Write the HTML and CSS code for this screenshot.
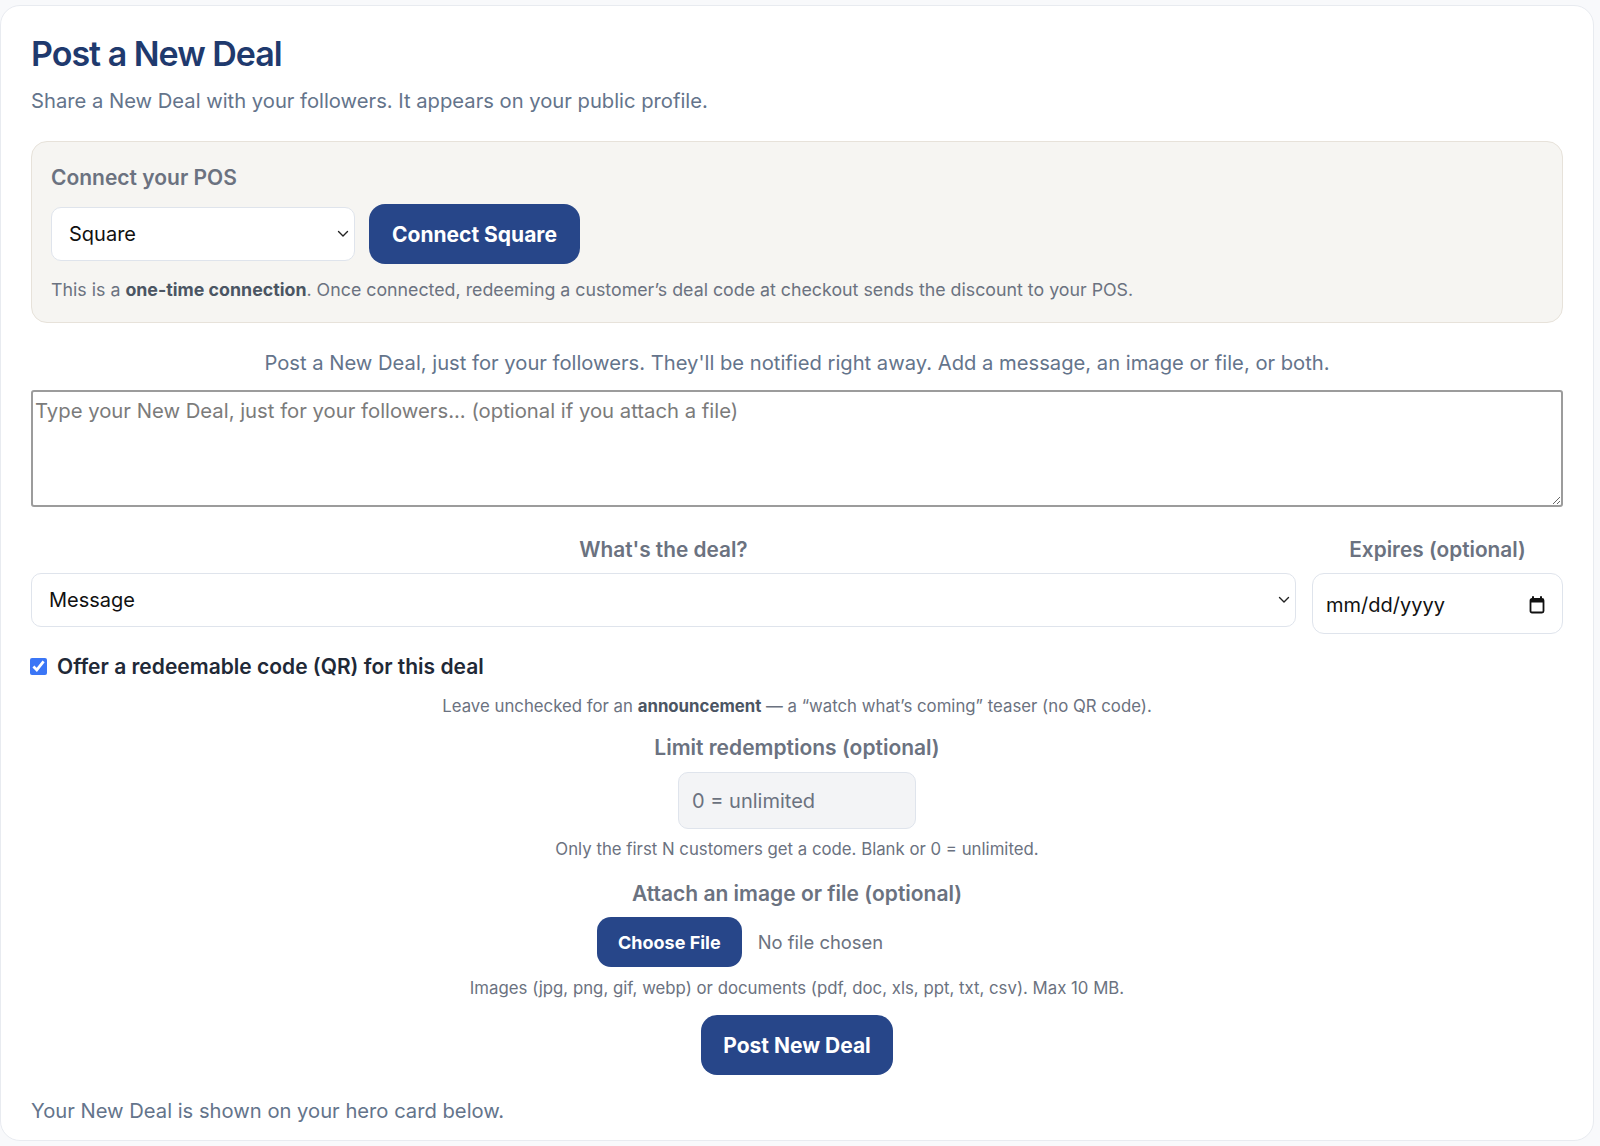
FILE: index.html
```html
<!DOCTYPE html>
<html lang="en">
<head>
<meta charset="utf-8">
<title>Post a New Deal</title>
<link rel="stylesheet" href="styles.css">
</head>
<body>
<main class="card">
  <h1 class="title">Post a New Deal</h1>
  <p class="subtitle">Share a New Deal with your followers. It appears on your public profile.</p>

  <section class="pos">
    <h2 class="pos-label">Connect your POS</h2>
    <div class="pos-row">
      <div class="select-wrap pos-select">
        <select class="select"><option>Square</option></select>
        <svg class="chev" width="12" height="8" viewBox="0 0 12 8"><path d="M1.5 1.5 6 6l4.5-4.5" fill="none" stroke="#222" stroke-width="1.4" stroke-linecap="round" stroke-linejoin="round"/></svg>
      </div>
      <button class="btn btn-lg" type="button">Connect Square</button>
    </div>
    <p class="pos-note">This is a <b>one-time connection</b>. Once connected, redeeming a customer’s deal code at checkout sends the discount to your POS.</p>
  </section>

  <p class="intro">Post a New Deal, just for your followers. They'll be notified right away. Add a message, an image or file, or both.</p>
  <textarea class="message" placeholder="Type your New Deal, just for your followers... (optional if you attach a file)"></textarea>

  <div class="deal-grid">
    <div class="field">
      <label class="label">What's the deal?</label>
      <div class="select-wrap">
        <select class="select"><option>Message</option></select>
        <svg class="chev" width="12" height="8" viewBox="0 0 12 8"><path d="M1.5 1.5 6 6l4.5-4.5" fill="none" stroke="#222" stroke-width="1.4" stroke-linecap="round" stroke-linejoin="round"/></svg>
      </div>
    </div>
    <div class="field">
      <label class="label">Expires (optional)</label>
      <div class="date">
        <span class="date-text">mm/dd/yyyy</span>
        <svg class="cal" width="16" height="18" viewBox="0 0 16 18"><path d="M4 1v3M12 1v3" stroke="#111" stroke-width="2" stroke-linecap="round"/><rect x="1.5" y="3" width="13" height="13.5" rx="1.5" fill="none" stroke="#111" stroke-width="1.8"/><rect x="1.5" y="3" width="13" height="3.5" fill="#111"/></svg>
      </div>
    </div>
  </div>

  <label class="check-row"><input type="checkbox" class="check" checked> <span>Offer a redeemable code (QR) for this deal</span></label>
  <p class="help help-first">Leave unchecked for an <b>announcement</b> — a “watch what’s coming” teaser (no QR code).</p>

  <div class="center-block">
    <label class="label">Limit redemptions (optional)</label>
    <input class="limit" type="text" placeholder="0 = unlimited">
    <p class="help help-limit">Only the first N customers get a code. Blank or 0 = unlimited.</p>

    <label class="label label-attach">Attach an image or file (optional)</label>
    <div class="file-row">
      <span class="btn btn-sm">Choose File</span>
      <span class="file-none">No file chosen</span>
    </div>
    <p class="help help-file">Images (jpg, png, gif, webp) or documents (pdf, doc, xls, ppt, txt, csv). Max 10 MB.</p>

    <button class="btn btn-lg btn-post" type="button">Post New Deal</button>
  </div>

  <p class="footer">Your New Deal is shown on your hero card below.</p>
</main>
</body>
</html>
```
FILE: styles.css
```css
* { box-sizing: border-box; }

body {
  margin: 0;
  background: #f8f9fb;
  font-family: Inter, "Noto Sans", sans-serif;
  color: #1f2937;
}

.card {
  margin: 5px 6px 0 0;
  background: #fff;
  border: 1px solid #e8ebf0;
  border-radius: 20px;
  padding: 26px 30px 15px 30px;
  min-height: 1136px;
}

.title {
  margin: 0;
  font-size: 34px;
  line-height: 44px;
  font-weight: 600;
  letter-spacing: -1px;
  color: #1f3a6e;
}

.subtitle {
  margin: 12px 0 0;
  font-size: 20.2px;
  line-height: 26px;
  color: #64748b;
}

.pos {
  margin-top: 27px;
  background: #f6f5f2;
  border: 1px solid #e7e2da;
  border-radius: 16px;
  padding: 23px 19px 20px;
}

.pos-label {
  margin: 0;
  font-size: 21px;
  line-height: 26px;
  font-weight: 600;
  color: #6b7280;
}

.pos-row {
  margin-top: 13px;
  display: flex;
  align-items: center;
  gap: 14px;
}

.select-wrap {
  position: relative;
}

.pos-select { width: 304px; }

.select {
  appearance: none;
  -webkit-appearance: none;
  width: 100%;
  height: 54px;
  border: 1px solid #dfe4ec;
  border-radius: 10px;
  background: #fff;
  font-family: inherit;
  font-size: 20px;
  color: #111;
  padding: 0 40px 0 17px;
}

.chev {
  position: absolute;
  right: 6px;
  top: 23px;
  pointer-events: none;
}

.btn {
  display: inline-flex;
  align-items: center;
  justify-content: center;
  background: #274689;
  color: #fff;
  border: 0;
  font-family: inherit;
  font-weight: 700;
  cursor: pointer;
}

.btn-lg {
  height: 60px;
  padding: 0 23px;
  border-radius: 16px;
  font-size: 21px;
}

.pos-note {
  margin: 14px 0 0;
  font-size: 17.8px;
  line-height: 24px;
  color: #6b7280;
}
.pos-note b { color: #4b5563; font-weight: 700; }

.intro {
  margin: 27px 0 0;
  text-align: center;
  font-size: 20.2px;
  line-height: 26px;
  color: #64748b;
}

.message {
  display: block;
  margin-top: 14px;
  width: 100%;
  height: 117px;
  border: 2px solid #9c9c9c;
  border-radius: 3px;
  padding: 6px 2px;
  font-family: inherit;
  font-size: 20.3px;
  line-height: 26px;
  resize: vertical;
}
.message::placeholder { color: #7b7b7b; }

.deal-grid {
  margin-top: 30px;
  display: grid;
  grid-template-columns: 1fr 251px;
  gap: 16px;
  align-items: start;
}

.field { display: flex; flex-direction: column; }

.label {
  display: block;
  text-align: center;
  font-size: 20.8px;
  line-height: 26px;
  font-weight: 600;
  color: #6b7280;
  margin-bottom: 10px;
}

.date {
  height: 61px;
  border: 1px solid #dfe4ec;
  border-radius: 12px;
  background: #fff;
  display: flex;
  align-items: center;
  justify-content: space-between;
  padding: 3px 17px 0 13px;
}

.date-text {
  font-size: 20px;
  color: #111;
}

.check-row {
  margin-top: 18px;
  display: flex;
  align-items: center;
  gap: 10px;
  height: 28px;
  font-size: 21px;
  font-weight: 600;
  color: #1f2937;
}

.check {
  margin: 0 0 0 -1px;
  width: 17px;
  height: 17px;
  accent-color: #3b76f6;
}

.help {
  margin: 0;
  text-align: center;
  font-size: 16.8px;
  line-height: 22px;
  color: #6b7280;
}
.help b { color: #4b5563; }

.help-first { margin-top: 15px; }

.center-block {
  display: flex;
  flex-direction: column;
  align-items: center;
}

.center-block .label { margin-top: 18px; margin-bottom: 11px; font-size: 21px; }

.limit {
  width: 238px;
  height: 57px;
  border: 1px solid #dfe4ec;
  border-radius: 10px;
  background: #f3f4f6;
  font-family: inherit;
  font-size: 20px;
  padding: 0 13px;
}
.limit::placeholder { color: #6b7280; }

.help-limit { margin-top: 9px; }

.center-block .label-attach { margin-top: 21px; margin-bottom: 10px; }

.file-row {
  width: 400px;
  display: flex;
  align-items: center;
  gap: 16px;
}

.btn-sm {
  height: 50px;
  padding: 0 21px;
  border-radius: 14px;
  font-size: 18px;
}

.file-none {
  font-size: 18.4px;
  color: #6b7280;
}

.help-file { margin-top: 10px; }

.btn-post { margin-top: 16px; padding: 0 22px; }

.footer {
  margin: 23px 0 0;
  font-size: 20.2px;
  line-height: 26px;
  color: #64748b;
}
```
